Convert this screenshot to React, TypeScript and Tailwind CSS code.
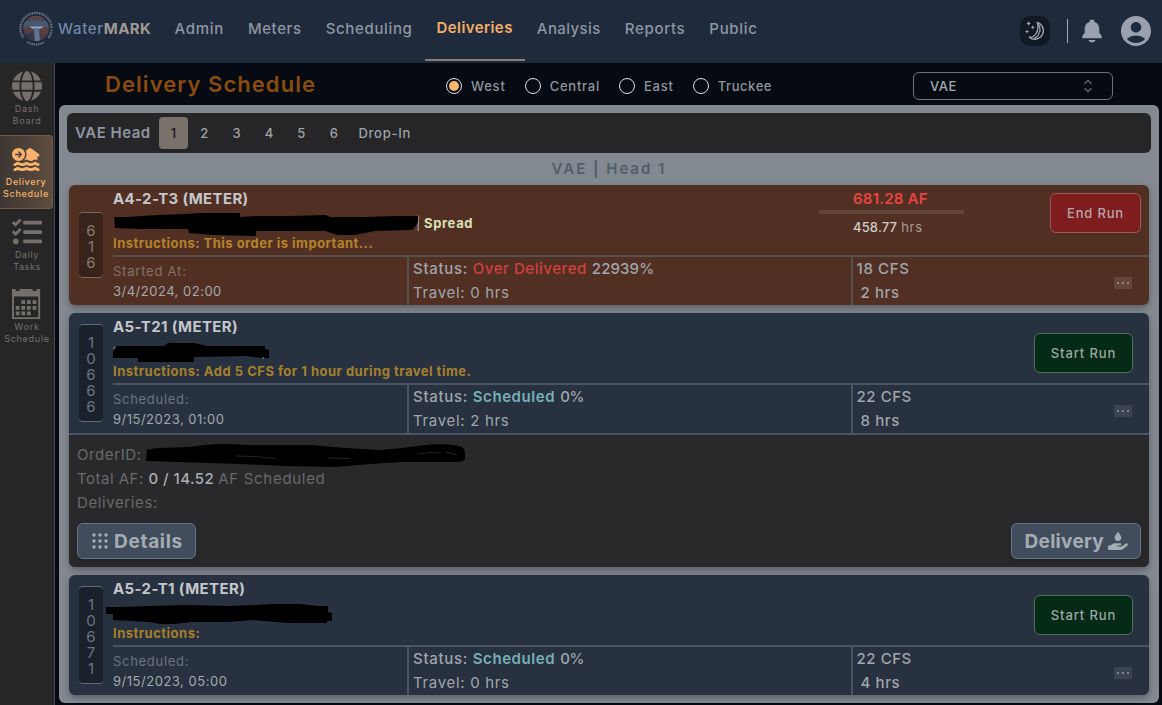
import type { ReactNode } from "react";
import { FaGlobe, FaHouseFloodWaterCircleArrowRight, FaHandHoldingDroplet } from "react-icons/fa6";
import { FaTasks } from "react-icons/fa";
import { ImCalendar } from "react-icons/im";
import { IoNotificationsSharp } from "react-icons/io5";
import { MdAccountCircle } from "react-icons/md";
import { HiChevronUpDown } from "react-icons/hi2";

function Logo() {
  return (
    <svg width="36" height="36" viewBox="0 0 36 36" className="shrink-0">
      <defs>
        <clipPath id="seal">
          <circle cx="18" cy="17.5" r="12.8" />
        </clipPath>
      </defs>
      <circle cx="18" cy="17.5" r="15.6" fill="none" stroke="#7e8692" strokeWidth="2.4" strokeDasharray="1.5 0.9" strokeDashoffset="1" opacity="0.8" />
      <g clipPath="url(#seal)">
        <rect x="4" y="4" width="28" height="28" fill="#4a3d44" />
        <path d="M4 11 Q18 7 32 11 V17 H4Z" fill="#465873" />
        <path d="M10 6 Q18 3 26 6 L24 9 H12Z" fill="#5d4448" />
        <path d="M6 17 L13 15 L14 21 L8 24Z M24 15 L31 17 L29 25 L23 22Z" fill="#593f42" />
        <path d="M11 15.5 H26 L22 18 H15Z" fill="#9ba6b4" />
        <path d="M16 17 H21 L22 31 H17Z" fill="#5c7695" />
        <path d="M7 23 L15 21 L16 31 L9 28Z" fill="#30394a" />
      </g>
      <path d="M5 28 Q18 37 31 28" fill="none" stroke="#1f2a3c" strokeWidth="4.4" />
      <path d="M9.5 31 Q18 36 26.5 31" fill="none" stroke="#717987" strokeWidth="2" strokeDasharray="1.4 0.8" />
    </svg>
  );
}

function MoonIcon() {
  return (
    <svg width="22" height="22" viewBox="0 0 22 22" fill="none" stroke="#a3a8b3" strokeWidth="1.3" strokeLinejoin="round" strokeLinecap="round">
      <path d="M13.2 2.4 A8.6 8.6 0 1 1 5.2 17.2 C11.5 17.4 15.6 10.6 13.2 2.4Z" />
      <path d="M14.6 4.6 C17 8.2 15.2 9.6 16.2 11 L15 12.2 C15.6 14.8 13 17.4 10 18.4" strokeWidth="1.2" />
      <path d="M4.6 1 L5.3 2.8 L7 3.5 L5.3 4.2 L4.6 6 L3.9 4.2 L2.2 3.5 L3.9 2.8Z M8.8 5.2 L9.4 6.7 L11 7.4 L9.4 8.1 L8.8 9.6 L8.2 8.1 L6.6 7.4 L8.2 6.7Z M3 9.4 L3.6 11 L5.2 11.6 L3.6 12.2 L3 13.8 L2.4 12.2 L0.8 11.6 L2.4 11Z" fill="#a3a8b3" stroke="none" />
    </svg>
  );
}

function Header() {
  const item = "flex h-[61px] items-center px-3 pb-[2px] text-[15px] font-medium text-[#8e96a3]";
  return (
    <header className="flex h-[63px] shrink-0 items-start bg-[#1f2a3c]">
      <div className="flex h-[57px] w-[162.5px] items-center pl-[18px]">
        <Logo />
        <span className="pt-[2px] pl-[4px] text-[15px] font-medium tracking-[0.7px] text-[#6f87a8]">Water</span>
        <span className="pt-[2px] text-[15px] font-bold tracking-[0.4px] text-[#a09a94]">MARK</span>
      </div>
      <nav className="flex">
        <a className={`${item} tracking-[0.7px]`}>Admin</a>
        <a className={`${item} tracking-[0.6px]`}>Meters</a>
        <a className={`${item} tracking-[0.65px]`}>Scheduling</a>
        <a className="flex h-[61px] items-center border-b-2 border-[#8b7c70] px-3 pb-[3px] text-[15px] font-semibold tracking-[0.42px] text-[#f3ae68]">Deliveries</a>
        <a className={`${item} tracking-[0.42px]`}>Analysis</a>
        <a className={`${item} tracking-[0.68px]`}>Reports</a>
        <a className={`${item} tracking-[0.68px]`}>Public</a>
      </nav>
      <div className="ml-auto flex h-[62px] items-center pr-[8px]">
        <div className="flex size-[30px] items-center justify-center rounded-[10px] bg-[#111925]">
          <MoonIcon />
        </div>
        <div className="ml-[17px] h-6 w-px bg-[#a3a8b3]" />
        <IoNotificationsSharp size={26} className="ml-[11px] text-[#9aa0ae]" />
        <MdAccountCircle size={36} className="ml-[13px] text-[#9aa0ae]" />
      </div>
    </header>
  );
}

function Sidebar() {
  const item = "flex flex-col items-center text-[9px] leading-3 text-[#75706b]";
  const icon = "mb-[2px] flex h-[30px] items-center justify-center";
  return (
    <aside className="w-[55px] shrink-0 border-r border-[#45474a] bg-[#262627]">
      <div className={`${item} h-[72px] pt-2 tracking-[0.75px]`}>
        <div className={icon}><FaGlobe size={30} /></div>
        <span>Dash</span>
        <span>Board</span>
      </div>
      <div className="flex h-[74px] w-[53px] flex-col items-center rounded-r-[4px] border-y border-r border-[#6b5a49] bg-linear-to-r from-[#3c3632] to-[#5e4d3e] pt-2 text-[9px] leading-3 font-medium text-[#f8b26d]">
        <div className={icon}><FaHouseFloodWaterCircleArrowRight size={29} /></div>
        <span className="tracking-[0.62px]">Delivery</span>
        <span className="tracking-[0.7px]">Schedule</span>
      </div>
      <div className={`${item} h-[72px] pt-2 tracking-[0.6px]`}>
        <div className={icon}><FaTasks size={30} /></div>
        <span>Daily</span>
        <span>Tasks</span>
      </div>
      <div className={`${item} pt-2 tracking-[0.75px]`}>
        <div className={icon}><ImCalendar size={30} /></div>
        <span>Work</span>
        <span>Schedule</span>
      </div>
    </aside>
  );
}

function Radio({ label, on, cls }: { label: string; on?: boolean; cls: string }) {
  return (
    <label className="flex items-center">
      <span className="flex size-4 items-center justify-center rounded-full border border-[#dfe3e6]">
        {on && <span className="size-[10px] rounded-full bg-[#fbb56c]" />}
      </span>
      <span className={`pt-[2px] pl-[9px] text-[13px] font-medium text-[#8f969d] ${cls}`}>{label}</span>
    </label>
  );
}

function Toolbar() {
  return (
    <div className="flex h-[42px] shrink-0 items-center pt-[3px]">
      <h1 className="w-[391px] pb-[3px] pl-[50px] text-[22px] font-semibold tracking-[1.06px] text-[#8a4b0f]">Delivery Schedule</h1>
      <div className="flex items-center gap-[19px]">
        <Radio label="West" on cls="tracking-[0.8px]" />
        <Radio label="Central" cls="tracking-[0.75px]" />
        <Radio label="East" cls="tracking-[0.8px]" />
        <Radio label="Truckee" cls="tracking-[0.55px]" />
      </div>
      <div className="mr-[49px] ml-auto flex h-7 w-[200px] items-center justify-between rounded-[6px] border border-[#6b7280] pr-[14px] pl-4">
        <span className="pt-[2px] text-[13px] font-medium tracking-[0.5px] text-[#a3a9af]">VAE</span>
        <HiChevronUpDown size={20} className="text-[#6b7280]" />
      </div>
    </div>
  );
}

function Tabs() {
  return (
    <div className="flex h-10 shrink-0 items-center rounded-[6px] bg-[#262628] pl-2">
      <span className="w-[84px] text-[15px] font-semibold tracking-[0.5px] text-[#9095a3]">VAE Head</span>
      <span className="flex h-8 w-[29px] items-center justify-center rounded-[4px] bg-[#78726b] pt-[2px] text-[13px] font-medium text-[#18181b]">1</span>
      <div className="flex pt-[2px] text-[13px] font-medium text-[#9ca3a8]">
        {["2", "3", "4", "5", "6"].map((n) => (
          <span key={n} className="w-[32.4px] text-center">{n}</span>
        ))}
        <span className="pl-[8.5px] tracking-[0.75px]">Drop-In</span>
      </div>
    </div>
  );
}

const themes = {
  running: { bg: "bg-[#513023]", line: "border-[#55514d]", id: "bg-[#38231a] border-[#7a6960] text-[#8a7a72]", dim: "text-[#857067]", dots: "bg-[#624639] text-[#96857d]" },
  scheduled: { bg: "bg-[#28313f]", line: "border-[#4b5462]", id: "bg-[#1b212b] border-[#626a76] text-[#6c7480]", dim: "text-[#6c7480]", dots: "bg-[#3b4350] text-[#7d8590]" },
};

interface CardProps {
  theme: keyof typeof themes;
  id: string;
  title: ReactNode;
  note: ReactNode;
  redaction: ReactNode;
  tag?: ReactNode;
  totals?: ReactNode;
  action: ReactNode;
  dateLabel: ReactNode;
  date: ReactNode;
  status: ReactNode;
  travel: string;
  flow: ReactNode;
  hours: string;
  children?: ReactNode;
}

function Card(p: CardProps) {
  const t = themes[p.theme];
  return (
    <section className={`overflow-hidden rounded-[6px] shadow-[0_3px_6px_rgba(0,0,0,0.3)] ${t.bg}`}>
      <div className="flex h-[120px]">
        <div className="flex w-11 shrink-0 items-center pl-[10px]">
          <div className={`flex w-6 flex-col items-center rounded-[4px] border-y pt-[10px] pb-[6px] text-[15px] leading-4 ${t.id}`}>
            {p.id.split("").map((d, i) => (
              <span key={i}>{d}</span>
            ))}
          </div>
        </div>
        <div className="flex min-w-0 grow flex-col">
          <div className={`flex h-[72px] shrink-0 border-b-2 ${t.line}`}>
            <div className="relative w-[706px] shrink-0 pt-[2px]">
              <div className="text-[15px] leading-6 font-bold text-[#c3c7cb]">{p.title}</div>
              <div className="h-[22px] pl-[303px] text-[13px] leading-6">{p.tag}</div>
              <div className="text-[13px] leading-5 font-bold text-[#a5802b]">{p.note}</div>
              {p.redaction}
            </div>
            {p.totals}
            {p.action}
          </div>
          <div className="flex grow">
            <div className="w-[294px] pt-1 text-[13px] leading-5">
              <div className={t.dim}>{p.dateLabel}</div>
              <div className="text-[#a3a8ad]">{p.date}</div>
            </div>
            <div className={`w-[444px] border-l-2 pl-1 text-[15px] leading-6 text-[#a0a6ab] ${t.line}`}>
              <div className="font-medium">{p.status}</div>
              <div className="tracking-[0.68px]">{p.travel}</div>
            </div>
            <div className={`flex grow justify-between border-l-2 pr-[17px] pl-[3.5px] text-[15px] leading-6 font-medium text-[#a0a6ab] ${t.line}`}>
              <div>
                <div>{p.flow}</div>
                <div className="pl-1 tracking-[0.6px]">{p.hours}</div>
              </div>
              <div className={`mt-5 flex h-3 w-[18px] items-center justify-center gap-[3px] ${t.dots}`}>
                <i className="size-[2px] bg-current" />
                <i className="size-[2px] bg-current" />
                <i className="size-[2px] bg-current" />
              </div>
            </div>
          </div>
        </div>
      </div>
      {p.children}
    </section>
  );
}

function StartRun() {
  return (
    <button className="mt-5 mr-4 ml-auto flex h-10 w-[99px] items-center justify-center rounded-[6px] border border-[#4d7058] bg-[#052b17] pt-[2px] text-[13px] font-medium tracking-[0.88px] text-[#9ca8a2]">
      Start Run
    </button>
  );
}

const scheduledStatus = (
  <>
    <span className="tracking-[0.7px]">Status: </span>
    <span className="font-semibold tracking-[0.57px] text-[#76b0b8]">Scheduled</span>
    <span className="pl-[5px] tracking-[-0.2px]">0%</span>
  </>
);

function DotGrid() {
  return (
    <svg width="16" height="16" viewBox="0 0 16 16" fill="currentColor">
      {[2, 8, 14].map((y) => [2, 8, 14].map((x) => <circle key={`${x}-${y}`} cx={x} cy={y} r="1.7" />))}
    </svg>
  );
}

export default function App() {
  const btn = "flex h-9 items-center rounded-[6px] border border-[#64748b] bg-[#414c5c] text-[19px] font-bold text-[#a5adb4] shadow-md";
  return (
    <div className="flex h-[705px] w-[1162px] flex-col overflow-hidden bg-[#060a12] font-['Inter','Liberation_Sans',sans-serif]">
      <Header />
      <div className="flex min-h-0 grow">
        <Sidebar />
        <main className="flex min-w-0 grow flex-col">
          <Toolbar />
          <div className="mr-[3px] ml-1 flex h-[598px] shrink-0 flex-col rounded-[6px] bg-[#828990] p-2">
            <Tabs />
            <h2 className="h-8 text-center text-[15px] leading-8 font-semibold tracking-[1.98px] text-[#535d69]">VAE | Head 1</h2>
            <div className="mx-[2px] flex flex-col gap-2">
              <Card
                theme="running"
                id="616"
                title={<span className="tracking-[0.36px]">A4-2-T3 (METER)</span>}
                tag={
                  <>
                    <span className="text-[#b3aaa4]">| </span>
                    <span className="font-bold tracking-[0.65px] text-[#d9e0b5]">Spread</span>
                  </>
                }
                note={<span className="tracking-[0.48px] text-[#b5822a]">Instructions: This order is important...</span>}
                redaction={
                  <svg className="absolute top-0 left-0" width="310" height="60" viewBox="113 185 310 60">
                    <path d="M114 217 H127 L158 215 L186 214 L200 213 H240 V217 L256 216 H290 L326 215 L330 217 H366 L395 216 H418 V222 L415 227 L412 230 L375 231 L355 235 H338 L325 231 H256 V236 L213 235 L189 233 L188 229 L140 229 L115 228Z" fill="#000" />
                  </svg>
                }
                totals={
                  <div className="w-[145px] pt-[2px] text-[13px]">
                    <div className="pl-[34px] text-[15px] leading-[23px] font-semibold tracking-[0.22px] text-[#ea4343]">681.28 AF</div>
                    <div className="h-1 bg-[#614539]" />
                    <div className="pl-[34px] leading-[26px] text-[#a89d97]">
                      <span className="font-medium tracking-[0.15px] text-[#cfcbc8]">458.77</span>
                      <span className="pl-1 tracking-[0.7px]">hrs</span>
                    </div>
                  </div>
                }
                action={
                  <button className="mt-2 mr-2 ml-auto flex h-10 w-[91px] items-center justify-center rounded-[6px] border border-[#9c5a5b] bg-[#7f1c1d] pt-[2px] text-[13px] font-medium tracking-[0.82px] text-[#b8a5a8]">
                    End Run
                  </button>
                }
                dateLabel={<span className="tracking-[0.78px]">Started At:</span>}
                date={<span className="tracking-[0.5px]">3/4/2024, 02:00</span>}
                status={
                  <>
                    <span className="tracking-[0.7px]">Status: </span>
                    <span className="tracking-[0.55px] text-[#d33f3f]">Over Delivered</span>
                    <span className="pl-[5px] tracking-[0.1px]">22939%</span>
                  </>
                }
                travel="Travel: 0 hrs"
                flow={<span className="tracking-[0.65px]">18 CFS</span>}
                hours="2 hrs"
              />
              <Card
                theme="scheduled"
                id="10666"
                title={<span className="tracking-[0.38px]">A5-T21 (METER)</span>}
                note={<span className="tracking-[0.5px]">Instructions: Add 5 CFS for 1 hour during travel time.</span>}
                redaction={
                  <svg className="absolute top-0 left-0" width="170" height="60" viewBox="113 313 170 60">
                    <path d="M114 346 H164 L168 343 H194 L208 346 H265 V349 L269 350 V358 L262 358 L247 356 L194 357 V362 H138 V358 H113 V350Z" fill="#000" />
                    <path d="M114 350 V347 H116 M263 357 V359" stroke="#8b9299" fill="none" />
                  </svg>
                }
                action={<StartRun />}
                dateLabel={<span className="tracking-[0.7px]">Scheduled:</span>}
                date={<span className="tracking-[0.5px]">9/15/2023, 01:00</span>}
                status={scheduledStatus}
                travel="Travel: 2 hrs"
                flow={<span className="tracking-[0.55px]">22 CFS</span>}
                hours="8 hrs"
              >
                <div className="relative h-[134px] border-t-2 border-[#4b5462] bg-[#29292b] p-2 text-[15px] leading-6 text-[#68696d]">
                  <div className="tracking-[0.6px]">OrderID:</div>
                  <div>
                    <span className="tracking-[0.5px]">Total AF: </span>
                    <span className="font-medium tracking-[0.45px] text-[#a9aeb4]">0 / 14.52</span>
                    <span className="pl-1 tracking-[0.7px]">AF Scheduled</span>
                  </div>
                  <div className="tracking-[0.6px]">Deliveries:</div>
                  <svg className="absolute top-[8px] left-[76px]" width="324" height="28" viewBox="145 443 324 28">
                    <path d="M147 449 L160 448 L190 447 L205 445 Q222 443 245 445 L310 445 L345 448 L380 450 L402 448 L425 445 Q450 443 462 447 Q465 449 465 454 V459 Q464 461 458 462 L400 462 L370 464 L335 467 L285 466 L240 464 L180 462 L146 461Z" fill="#000" />
                    <path d="M236 456 L255 456.5 L276 458.5 M328 458 L350 458.5 M417 454 L430 452.5 L441 453 M445 452 L457 455 M148 450 L152 448.5" stroke="#3c3d40" strokeWidth="0.6" fill="none" />
                  </svg>
                  <div className="flex justify-between pt-2">
                    <button className={`${btn} w-[119px] gap-[6px] pl-[14px] tracking-[0.68px]`}>
                      <DotGrid />
                      <span className="pt-[2px]">Details</span>
                    </button>
                    <button className={`${btn} w-[130px] gap-1 pl-[12.5px] tracking-[0.3px]`}>
                      <span className="pt-[2px]">Delivery</span>
                      <FaHandHoldingDroplet size={20} />
                    </button>
                  </div>
                </div>
              </Card>
              <Card
                theme="scheduled"
                id="10671"
                title={<span className="tracking-[0.38px]">A5-2-T1 (METER)</span>}
                note={<span className="tracking-[0.5px]">Instructions:</span>}
                redaction={
                  <svg className="absolute top-0 -left-[8px]" width="240" height="60" viewBox="105 575 240 60">
                    <path d="M106 607 H120 L150 606 L185 605 L230 606 L255 605 L272 604 H300 L318 606 H328 V612 L332 613 V621 H327 V623 L290 623 L252 620 L227 622 L190 622 L175 624 H160 L150 622 L113 620 V614 H106Z" fill="#000" />
                  </svg>
                }
                action={<StartRun />}
                dateLabel={<span className="tracking-[0.7px]">Scheduled:</span>}
                date={<span className="tracking-[0.52px]">9/15/2023, 05:00</span>}
                status={scheduledStatus}
                travel="Travel: 0 hrs"
                flow={<span className="tracking-[0.55px]">22 CFS</span>}
                hours="4 hrs"
              />
            </div>
          </div>
        </main>
      </div>
    </div>
  );
}
